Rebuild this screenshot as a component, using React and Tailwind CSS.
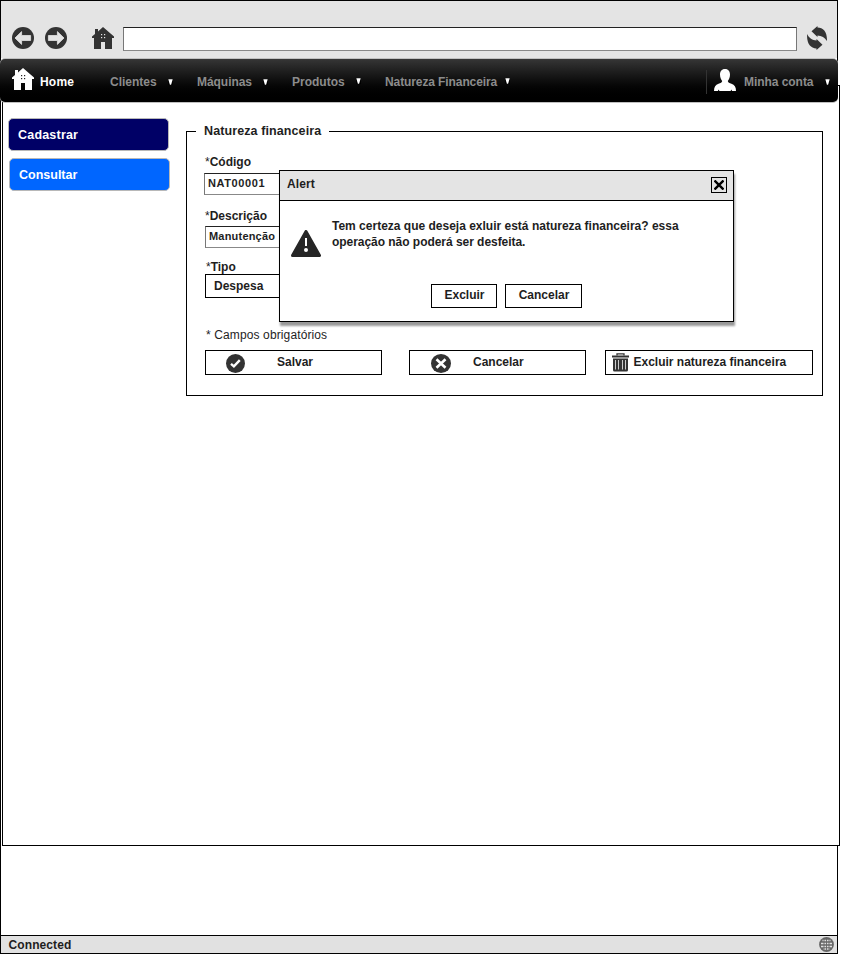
const ArrowCircle = ({ flip }) => (
  <svg width="22" height="22" viewBox="0 0 22 22" className={flip ? 'block -scale-x-100' : 'block'}>
    <circle cx="11" cy="11" r="11" fill="#333" />
    <path d="M3 11 L9.6 4.6 V8.5 H18.6 V13.5 H9.6 V17.4 Z" fill="#e4e4e4" stroke="#e4e4e4" strokeWidth="0.8" strokeLinejoin="round" />
  </svg>
);

const House = ({ color, hole }) => (
  <svg width="22" height="22" viewBox="0 0 22 22" className="block shrink-0">
    <path d="M11 0 L22 9.6 V11 H20 V22 H13 V15 H9 V22 H2 V11 H0 V9.6 L3 7 V2 H6 V4.4 Z" fill={color} />
    <g fill={hole}>
      <rect x="9" y="7" width="1.2" height="1.2" />
      <rect x="12" y="7" width="1.2" height="1.2" />
      <rect x="9" y="10" width="1.2" height="1.2" />
      <rect x="12" y="10" width="1.2" height="1.2" />
    </g>
  </svg>
);

const Refresh = () => (
  <svg width="20" height="24" viewBox="0 0 20 24" className="block">
    <path d="M4.500 5.300 L10.500 0 V1.500 C16.500 1.500 20.500 6.500 19.900 15 C18 11.800 14.500 9.800 10.500 9.600 V11 Z" fill="#333" />
    <path d="M15.500 18.700 L9.500 24 V22.500 C3.500 22.500 -0.500 17.500 0.100 8 C2 12.200 5.500 14.200 9.500 14.400 V13 Z" fill="#333" />
  </svg>
);

const Person = () => (
  <svg width="22" height="22" viewBox="0 0 22 22" className="block">
    <path d="M11 0 C14.500 0 16 2.500 16 5.500 C16 8.500 15 10.500 13.800 12 C14 13.500 15.500 14 17.500 14.800 C20.500 16 22 18 22 22 H18 L17.500 20.500 L16.500 22 H5.500 L4.500 20.500 L4 22 H0 C0 18 1.500 16 4.500 14.800 C6.500 14 8 13.500 8.200 12 C7 10.500 6 8.500 6 5.500 C6 2.500 7.500 0 11 0 Z" fill="#fff" />
  </svg>
);

const Caret = () => (
  <svg width="5" height="6" viewBox="0 0 5 6" className="block">
    <rect width="5" height="6" fill="#000" />
    <path d="M0.300 0.300 H4.700 L3.100 5.700 H1.900 Z" fill="#fff" />
  </svg>
);

const Check = () => (
  <svg width="19" height="19" viewBox="0 0 19 19" className="block">
    <circle cx="9.500" cy="9.500" r="9.500" fill="#333" />
    <path d="M5 9.800 L7.900 12.400 L13.800 6.200" fill="none" stroke="#fff" strokeWidth="2.400" />
  </svg>
);

const Cross = () => (
  <svg width="20" height="19" viewBox="0 0 20 19" className="block">
    <ellipse cx="10" cy="9.500" rx="10" ry="9.400" fill="#333" />
    <path d="M5.500 5.200 L14.500 13.800 M14.500 5.200 L5.500 13.800" fill="none" stroke="#fff" strokeWidth="2.600" />
  </svg>
);

const Trash = () => (
  <svg width="17" height="19" viewBox="0 0 17 19" className="block">
    <path d="M5 2.500 V0.800 H12 V2.500" fill="none" stroke="#333" strokeWidth="1.300" />
    <path d="M0 2.400 H17 V4.400 H0 Z M1 5.500 H16 V17 Q16 18.500 14.500 18.500 H2.500 Q1 18.500 1 17 Z" fill="#333" />
    <path d="M3.500 7 V16.500 M6.500 7 V16.500 M10.500 7 V16.500 M13.500 7 V16.500" stroke="#ccc" strokeWidth="1" />
  </svg>
);

const Warning = () => (
  <svg width="30" height="27" viewBox="0 0 30 27" className="block">
    <path d="M15 1.500 L28.500 25.500 H1.500 Z" fill="#262626" stroke="#262626" strokeWidth="3" strokeLinejoin="round" />
    <path d="M14 8 H16 V16 H14 Z M15 18 A2 2 0 0 1 15 22 A2 2 0 0 1 15 18 Z" fill="#fff" />
  </svg>
);

const Globe = () => (
  <svg width="15" height="15" viewBox="0 0 15 15" className="block">
    <circle cx="7.500" cy="7.500" r="7.400" fill="#666" />
    <g fill="none" stroke="#e1e1e1" strokeWidth="1">
      <path d="M3.500 3.500 H11.500 M2 6.500 H13 M2 9.500 H13 M4.500 12 H10.500" strokeWidth="1.600" />
      <path d="M5 2 V13 M7.500 2 V13 M10 2 V13" stroke="#666" strokeWidth="0.900" />
    </g>
  </svg>
);

const menu = [
  { label: 'Clientes', item: 'w-[87px]', text: 'w-[58px]', caret: 'mt-[5px]' },
  { label: 'Máquinas', item: 'w-[95px]', text: 'w-[66px] tracking-[-0.05px]', caret: 'mt-[5px]' },
  { label: 'Produtos', item: 'w-[93px]', text: 'w-[64px]', caret: 'mt-[4px]' },
  { label: 'Natureza Financeira', item: 'w-[130px]', text: 'w-[120px] tracking-[-0.1px]', caret: 'mt-[4px]' },
];

function Toolbar() {
  return (
    <div className="flex h-[57px] shrink-0 items-start bg-[#e4e4e4] pl-[11px]">
      <div className="mt-[26px]"><ArrowCircle /></div>
      <div className="mt-[26px] ml-[11px]"><ArrowCircle flip /></div>
      <div className="mt-[26px] ml-[25px]"><House color="#333" hole="#e4e4e4" /></div>
      <div className="mt-[26px] ml-[9px] h-6 w-[674px] border border-t-[#222] border-r-[#777] border-b-[#888] border-l-[#777] bg-white" />
      <div className="mt-[25px] ml-[10px]"><Refresh /></div>
    </div>
  );
}

function Nav() {
  return (
    <nav className="relative z-10 -mx-px h-[45px] shrink-0 rounded-[5px] bg-[#c0c0c0] py-px">
      <div className="flex h-[43px] items-start rounded-[5px] bg-linear-to-b from-[#363636] to-black pl-[12px] text-[#8c8c8c]">
        <div className="mt-[9px] flex w-[98px]">
          <House color="#fff" hole="#222" />
          <span className="mt-[6px] ml-[6px] tracking-[0.2px] text-white">Home</span>
        </div>
        {menu.map((m) => (
          <div key={m.label} className={`mt-[15px] flex items-start ${m.item}`}>
            <span className={m.text}>{m.label}</span>
            <span className={m.caret}><Caret /></span>
          </div>
        ))}
        <div className="mt-[11px] ml-[191px] h-6 w-px bg-[#333]" />
        <div className="mt-[10px] ml-[7px]"><Person /></div>
        <span className="mt-[15px] ml-[8px] w-[81px] shrink-0 tracking-[-0.05px] whitespace-nowrap">Minha conta</span>
        <span className="mt-[20px]"><Caret /></span>
      </div>
    </nav>
  );
}

function Form() {
  return (
    <section className="mt-[45px] ml-[17px] h-[265px] w-[637px] border border-black">
      <h2 className="-mt-[9px] ml-[9px] w-[133px] bg-white pl-[8px] text-[12.5px] leading-4 tracking-[0.1px] whitespace-nowrap">Natureza financeira</h2>
      <div className="ml-[17px] pt-[15px]">
        <label className="ml-px block"><span className="font-normal">*</span>Código</label>
        <div className="mt-[3px] h-[22px] w-[120px] border border-t-[#222] border-r-[#777] border-b-[#888] border-l-[#777] pt-px pl-[3px] text-[11px] leading-4 tracking-[0.6px]">NAT00001</div>
        <label className="mt-[13px] ml-px block"><span className="font-normal">*</span>Descrição</label>
        <div className="mt-[2px] ml-px h-[22px] w-[120px] border border-t-[#222] border-r-[#777] border-b-[#888] border-l-[#777] pt-px pl-[3px] text-[11px] leading-4 tracking-[0.2px]">Manutenção</div>
        <label className="mt-[11px] ml-[2px] block"><span className="font-normal">*</span>Tipo</label>
        <div className="-mt-px ml-px h-6 w-[120px] border border-black pt-[3px] pl-[8px]">Despesa</div>
        <p className="mt-[29px] ml-[2px] font-normal tracking-[0.12px]">* Campos obrigatórios</p>
      </div>
      <div className="mt-[7px] ml-[18px] flex">
        <button className="flex h-[25px] w-[177px] border border-black pl-[20px]">
          <span className="mt-[2.500px] -ml-[0.5px]"><Check /></span>
          <span className="mt-[3px] ml-[32.5px]">Salvar</span>
        </button>
        <button className="ml-[27px] flex h-[25px] w-[177px] border border-black pl-[21px]">
          <span className="mt-[2.500px]"><Cross /></span>
          <span className="mt-[3px] ml-[22px]">Cancelar</span>
        </button>
        <button className="ml-[19px] flex h-[25px] w-[208px] border border-black pl-[6px]">
          <span className="mt-[2px]"><Trash /></span>
          <span className="mt-[3px] ml-[4.5px] whitespace-nowrap">Excluir natureza financeira</span>
        </button>
      </div>
    </section>
  );
}

function Alert() {
  return (
    <div role="alertdialog" className="absolute top-[170px] left-[279px] z-20 h-[152px] w-[455px] border border-black bg-white shadow-[1px_4px_2px_0px_rgba(0,0,0,0.4)]">
      <header className="flex h-[30px] justify-between border-b border-black bg-[#e4e4e4] pr-[6px] pl-[7px]">
        <span className="mt-[5px] tracking-[0.1px]">Alert</span>
        <button className="mt-[6px] flex h-4 w-4 items-center justify-center border border-black">
          <svg width="10" height="10" viewBox="0 0 10 10"><path d="M0.500 0.500 L9.500 9.500 M9.500 0.500 L0.500 9.500" stroke="#000" strokeWidth="2.400" /></svg>
        </button>
      </header>
      <div className="flex pt-[17px] pl-[11px]">
        <div className="mt-[12px]"><Warning /></div>
        <p className="ml-[11px] w-[370px]">Tem certeza que deseja exluir está natureza financeira? essa<br /><span className="tracking-[-0.04px]">operação não poderá ser desfeita.</span></p>
      </div>
      <div className="mt-[27px] flex pl-[151px]">
        <button className="flex h-6 w-[66px] justify-center border border-black pt-[2px] pl-px">Excluir</button>
        <button className="ml-[8px] flex h-6 w-[77px] justify-center border border-black pt-[2px] pl-px">Cancelar</button>
      </div>
    </div>
  );
}

export default function App() {
  return (
    <div className="h-[957px] w-[842px] overflow-hidden bg-white font-['Liberation_Sans',Arial,sans-serif] text-[12px] leading-4 font-bold text-[#1e1e1e]">
      <div className="relative flex h-[954px] w-[838px] flex-col border border-black">
        <Toolbar />
        <Nav />
        <main className="relative -mt-[18px] ml-px flex h-[761px] w-[838px] shrink-0 border border-black bg-white">
          <aside className="ml-[5px] w-[161px] pt-[32px] text-[12.5px] leading-4 text-white">
            <div className="h-[33px] w-[161px] rounded-[5px] border border-[#b8b8b8] bg-[#000066] pt-[8px] pl-[9px] tracking-[0.2px]">Cadastrar</div>
            <div className="mt-[7px] ml-px h-[33px] w-[161px] rounded-[5px] border border-[#b8b8b8] bg-[#0066ff] pt-[8px] pl-[9px]">Consultar</div>
          </aside>
          <Form />
        </main>
        <footer className="mt-auto flex h-[18px] shrink-0 justify-between border-t border-black bg-[#e1e1e1] pr-[3px] pl-[7.5px]">
          <span className="mt-px tracking-[0.1px]">Connected</span>
          <span className="mt-px"><Globe /></span>
        </footer>
      </div>
      <Alert />
    </div>
  );
}
